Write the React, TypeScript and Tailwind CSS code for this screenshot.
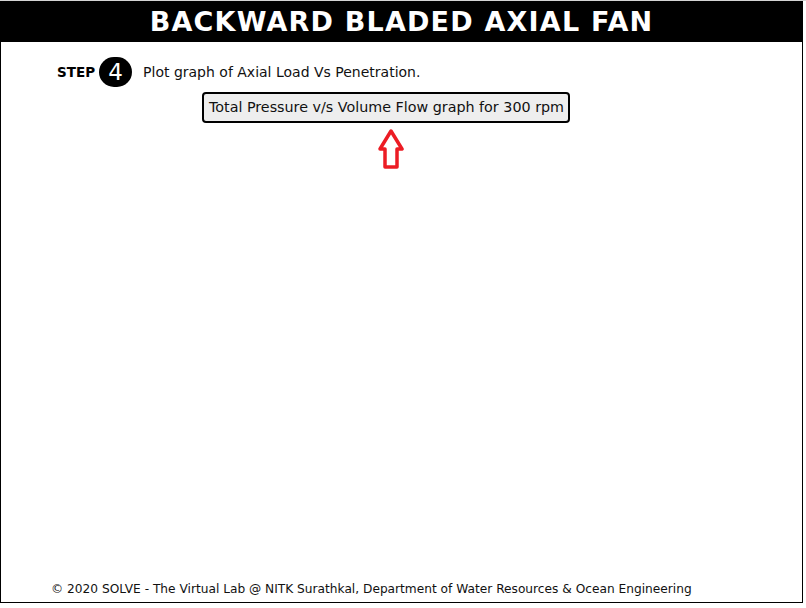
const App = () => {
  return (
    <div className="w-[806px] h-[608px] bg-white" style={{ fontFamily: '"DejaVu Sans", Verdana, sans-serif' }}>
      <div className="h-px bg-[#d4d4d4]" />
      <div className="w-[803px] h-[602px] border border-t-0 border-black flex flex-col">
        <header className="h-[41px] bg-black flex items-center justify-center">
          <h1 className="text-white font-bold text-[27px] leading-none tracking-[1.2px] pb-px">
            BACKWARD BLADED AXIAL FAN
          </h1>
        </header>

        <div className="flex items-center pl-[56px] mt-[14px] h-[32px]">
          <span className="font-bold text-[13.5px] text-black">STEP</span>
          <span className="ml-[4px] w-[33px] h-[30px] rounded-full bg-black text-white flex items-center justify-center text-[23px] leading-none">
            4
          </span>
          <span className="ml-[11px] text-[14px] text-[#111]">Plot graph of Axial Load Vs Penetration.</span>
        </div>

        <div className="ml-[201px] mt-[4px] w-[368px] h-[31px] border-2 border-black rounded-[4px] bg-[#eeeeee] flex items-center pl-[5px] text-[14.3px] text-[#111] whitespace-nowrap">
          Total Pressure v/s Volume Flow graph for 300 rpm
        </div>

        <div className="ml-[377px] mt-[6px]">
          <svg className="block" width="26" height="40" viewBox="0 0 26 40">
            <path
              d="M13 2 L24 20 L19 20 L19 38 L7 38 L7 20 L2 20 Z"
              fill="none"
              stroke="#ec1c24"
              strokeWidth="3.5"
              strokeLinejoin="round"
            />
          </svg>
        </div>

        <footer className="mt-auto pb-[4px] pl-[50px] text-[12.2px] text-[#111]">
          © 2020 SOLVE - The Virtual Lab @ NITK Surathkal, Department of Water Resources &amp; Ocean Engineering
        </footer>
      </div>
    </div>
  )
}

export default App
